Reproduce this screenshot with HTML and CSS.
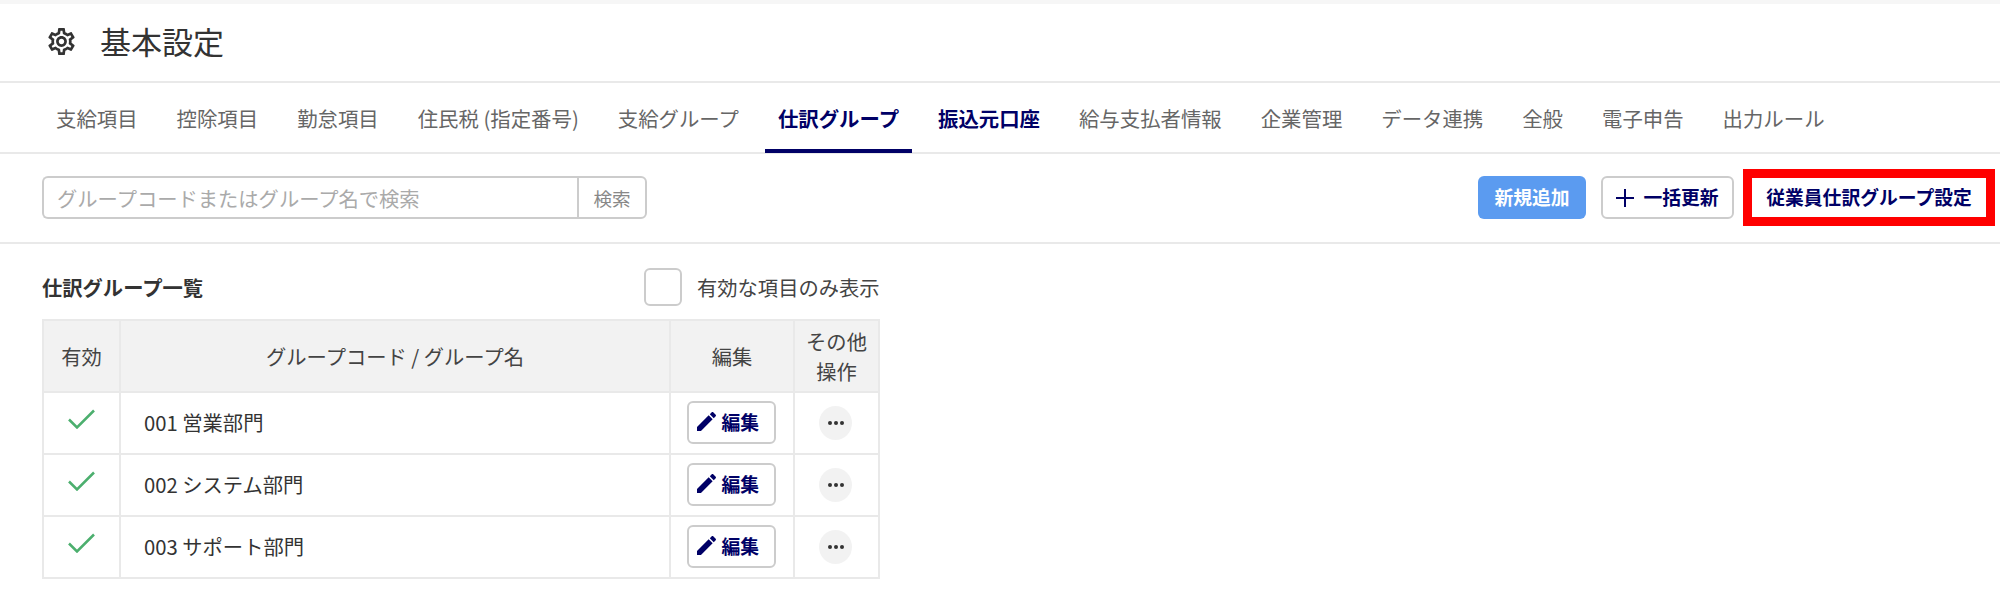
FILE: index.html
```html
<!DOCTYPE html>
<html lang="ja">
<head>
    <meta charset="UTF-8">
    <meta name="viewport" content="width=device-width, initial-scale=1.0">
    <title>基本設定</title>
    <link rel="stylesheet" href="styles.css">
</head>
<body>

    <!-- Page header -->
    <header class="page-header">
        <svg class="gear-icon" viewBox="2 2 20 20"><path d="M19.43 12.98c.04-.32.07-.64.07-.98 0-.34-.03-.66-.07-.98l2.11-1.65c.19-.15.24-.42.12-.64l-2-3.46c-.09-.16-.26-.25-.44-.25-.06 0-.12.01-.17.03l-2.49 1c-.52-.4-1.08-.73-1.69-.98l-.38-2.65C14.46 2.18 14.25 2 14 2h-4c-.25 0-.46.18-.49.42l-.38 2.65c-.61.25-1.17.59-1.69.98l-2.49-1c-.06-.02-.12-.03-.18-.03-.17 0-.34.09-.43.25l-2 3.46c-.13.22-.07.49.12.64l2.11 1.65c-.04.32-.07.65-.07.98 0 .33.03.66.07.98l-2.11 1.65c-.19.15-.24.42-.12.64l2 3.46c.09.16.26.25.44.25.06 0 .12-.01.17-.03l2.49-1c.52.4 1.08.73 1.69.98l.38 2.65c.03.24.24.42.49.42h4c.25 0 .46-.18.49-.42l.38-2.65c.61-.25 1.17-.59 1.69-.98l2.49 1c.06.02.12.03.18.03.17 0 .34-.09.43-.25l2-3.46c.12-.22.07-.49-.12-.64l-2.11-1.65zm-1.98-1.71c.04.31.05.52.05.73 0 .21-.02.43-.05.73l-.14 1.13.89.7 1.08.84-.7 1.21-1.27-.51-1.04-.42-.9.68c-.43.32-.84.56-1.25.73l-1.06.43-.16 1.13-.2 1.35h-1.4l-.19-1.35-.16-1.13-1.06-.43c-.43-.18-.83-.41-1.23-.71l-.91-.7-1.06.43-1.27.51-.7-1.21 1.08-.84.89-.7-.14-1.13c-.03-.31-.05-.54-.05-.74s.02-.43.05-.73l.14-1.13-.89-.7-1.08-.84.7-1.21 1.27.51 1.04.42.9-.68c.43-.32.84-.56 1.25-.73l1.06-.43.16-1.13.2-1.35h1.39l.19 1.35.16 1.13 1.06.43c.43.18.83.41 1.23.71l.91.7 1.06-.43 1.27-.51.7 1.21-1.07.85-.89.7.14 1.13zM12 8c-2.21 0-4 1.79-4 4s1.79 4 4 4 4-1.79 4-4-1.79-4-4-4zm0 6c-1.1 0-2-.9-2-2s.9-2 2-2 2 .9 2 2-.9 2-2 2z"/></svg>
        <h1>基本設定</h1>
    </header>

    <!-- Tabs -->
    <nav class="tabs">
        <a class="tab">支給項目</a>
        <a class="tab">控除項目</a>
        <a class="tab">勤怠項目</a>
        <a class="tab">住民税 (指定番号)</a>
        <a class="tab">支給グループ</a>
        <a class="tab active">仕訳グループ</a>
        <a class="tab strong">振込元口座</a>
        <a class="tab">給与支払者情報</a>
        <a class="tab">企業管理</a>
        <a class="tab">データ連携</a>
        <a class="tab">全般</a>
        <a class="tab">電子申告</a>
        <a class="tab">出力ルール</a>
    </nav>

    <!-- Toolbar -->
    <div class="toolbar">
        <div class="search-box">
            <input type="text" placeholder="グループコードまたはグループ名で検索">
            <button class="search-btn">検索</button>
        </div>
        <div class="toolbar-actions">
            <button class="btn btn-primary">新規追加</button>
            <button class="btn btn-plus"><span class="plus"></span>一括更新</button>
            <button class="btn btn-marked">従業員仕訳グループ設定</button>
        </div>
    </div>

    <!-- List -->
    <section class="list">
        <div class="list-head">
            <h2>仕訳グループ一覧</h2>
            <label class="only-active">
                <span class="checkbox"></span>
                有効な項目のみ表示
            </label>
        </div>

        <table class="group-table">
            <thead>
                <tr>
                    <th class="col-active">有効</th>
                    <th class="col-name">グループコード / グループ名</th>
                    <th class="col-edit">編集</th>
                    <th class="col-more">その他<br>操作</th>
                </tr>
            </thead>
            <tbody>
                <tr>
                    <td class="cell-check"><svg class="check-icon" viewBox="0 0 27 20"><path d="M1 10.5 9 18.5 26 1.500"/></svg></td>
                    <td class="cell-name">001 営業部門</td>
                    <td class="cell-center"><button class="edit-btn"><svg class="pencil-icon" viewBox="3 3 18 18"><path d="M3 17.25V21h3.75L17.81 9.94l-3.75-3.75L3 17.25zM20.71 7.04c.39-.39.39-1.02 0-1.41l-2.34-2.34c-.39-.39-1.02-.39-1.41 0l-1.83 1.83 3.75 3.75 1.83-1.83z"/></svg>編集</button></td>
                    <td class="cell-center"><button class="more-btn"><i></i><i></i><i></i></button></td>
                </tr>
                <tr>
                    <td class="cell-check"><svg class="check-icon" viewBox="0 0 27 20"><path d="M1 10.5 9 18.5 26 1.500"/></svg></td>
                    <td class="cell-name">002 システム部門</td>
                    <td class="cell-center"><button class="edit-btn"><svg class="pencil-icon" viewBox="3 3 18 18"><path d="M3 17.25V21h3.75L17.81 9.94l-3.75-3.75L3 17.25zM20.71 7.04c.39-.39.39-1.02 0-1.41l-2.34-2.34c-.39-.39-1.02-.39-1.41 0l-1.83 1.83 3.75 3.75 1.83-1.83z"/></svg>編集</button></td>
                    <td class="cell-center"><button class="more-btn"><i></i><i></i><i></i></button></td>
                </tr>
                <tr>
                    <td class="cell-check"><svg class="check-icon" viewBox="0 0 27 20"><path d="M1 10.5 9 18.5 26 1.500"/></svg></td>
                    <td class="cell-name">003 サポート部門</td>
                    <td class="cell-center"><button class="edit-btn"><svg class="pencil-icon" viewBox="3 3 18 18"><path d="M3 17.25V21h3.75L17.81 9.94l-3.75-3.75L3 17.25zM20.71 7.04c.39-.39.39-1.02 0-1.41l-2.34-2.34c-.39-.39-1.02-.39-1.41 0l-1.83 1.83 3.75 3.75 1.83-1.83z"/></svg>編集</button></td>
                    <td class="cell-center"><button class="more-btn"><i></i><i></i><i></i></button></td>
                </tr>
            </tbody>
        </table>
    </section>

</body>
</html>
```
FILE: styles.css
```css
/* General Styles */
* {
    box-sizing: border-box;
}

body {
    margin: 0;
    background: #fff;
    color: #333;
    font-family: "Noto Sans CJK JP", "Noto Sans", sans-serif;
    font-size: 20.3px;
}

button {
    font-family: inherit;
    cursor: pointer;
}

/* Page Header */
.page-header {
    display: flex;
    align-items: center;
    height: 83px;
    padding: 0 0 3px 48px;
    border-top: 4px solid #f6f6f6;
    border-bottom: 2px solid #e9e9e9;
}

.gear-icon {
    width: 27px;
    height: 27px;
    fill: #333;
}

h1 {
    margin: 0 0 0 25px;
    font-size: 31px;
    font-weight: 400;
    line-height: 40px;
}

/* Tabs */
.tabs {
    display: flex;
    gap: 13px;
    height: 71px;
    padding-left: 43px;
    border-bottom: 2px solid #e9e9e9;
}

.tab {
    display: flex;
    align-items: center;
    padding: 4px 13px 0;
    color: #666;
    font-size: 20.4px;
    white-space: nowrap;
    border-bottom: 4px solid transparent;
    margin-bottom: -1px;
}

.tab.strong,
.tab.active {
    color: #000066;
    font-weight: 700;
}

.tab.active {
    border-bottom-color: #000066;
}

/* Toolbar */
.toolbar {
    display: flex;
    justify-content: space-between;
    align-items: center;
    height: 90px;
    padding: 0 5px 1px 42px;
    border-bottom: 2px solid #e9e9e9;
}

.search-box {
    display: flex;
    width: 605px;
    height: 43px;
}

.search-box input {
    flex: 1;
    min-width: 0;
    padding: 0 13px;
    border: 2px solid #ccc;
    border-right: none;
    border-radius: 6px 0 0 6px;
    font-family: inherit;
    font-size: 20.3px;
    outline: none;
}

.search-box input::placeholder {
    color: #aaa;
}

.search-btn {
    width: 70px;
    padding: 0;
    border: 2px solid #ccc;
    border-radius: 0 6px 6px 0;
    background: #fff;
    color: #888;
    font-size: 18.6px;
}

.toolbar-actions {
    display: flex;
    align-items: center;
}

.btn {
    height: 43px;
    padding: 0 0 2px;
    border: 2px solid #ccc;
    border-radius: 6px;
    background: #fff;
    color: #000066;
    font-size: 18.8px;
    font-weight: 700;
    white-space: nowrap;
}

.btn-primary {
    width: 108px;
    border: none;
    background: #5b9bf0;
    color: #fff;
}

.btn-plus {
    display: flex;
    align-items: center;
    justify-content: center;
    width: 133px;
    margin-left: 15px;
}

.plus {
    position: relative;
    width: 18px;
    height: 18px;
    margin: 2px 9px 0 0;
}

.plus::before,
.plus::after {
    content: "";
    position: absolute;
    background: #000066;
}

.plus::before {
    left: 0;
    right: 0;
    top: 8px;
    height: 2px;
}

.plus::after {
    top: 0;
    bottom: 0;
    left: 8px;
    width: 2px;
}

.btn-marked {
    width: 252px;
    height: 57px;
    margin-left: 9px;
    border: 9px solid #ff0000;
    border-radius: 0;
}

/* List */
.list {
    padding: 0 42px;
}

.list-head {
    display: flex;
    align-items: center;
    width: 838px;
    height: 75px;
    padding-top: 10px;
}

h2 {
    margin: 0;
    width: 602px;
    font-size: 20.3px;
    font-weight: 700;
    line-height: 30px;
}

.only-active {
    display: flex;
    align-items: center;
    color: #444;
    white-space: nowrap;
}

.checkbox {
    width: 38px;
    height: 38px;
    margin-right: 15px;
    border: 2px solid #ccc;
    border-radius: 6px;
}

/* Table */
.group-table {
    width: 838px;
    border-collapse: collapse;
    table-layout: fixed;
}

.group-table th,
.group-table td {
    padding: 0;
    border: 2px solid #e9e9e9;
    text-align: center;
    height: 62px;
}

.group-table th {
    height: 72px;
    background: #f2f2f2;
    color: #444;
    font-weight: 400;
    line-height: 30px;
}

.col-active {
    width: 77px;
}

.col-edit {
    width: 124px;
}

.col-more {
    width: 85px;
}

.group-table td.cell-name {
    padding: 0 0 2px 23px;
    text-align: left;
}

.group-table td.cell-center {
    padding: 0 2px 2px 0;
}

.group-table td.cell-check {
    padding-bottom: 8px;
}

.check-icon {
    display: block;
    width: 27px;
    height: 20px;
    margin: 0 auto;
    fill: none;
    stroke: #4caf6e;
    stroke-width: 2.500;
}

.edit-btn {
    display: inline-flex;
    align-items: center;
    width: 89px;
    height: 43px;
    padding: 0 0 2px 8px;
    border: 2px solid #ccc;
    border-radius: 6px;
    background: #fff;
    color: #000066;
    font-size: 18.8px;
    font-weight: 700;
    vertical-align: middle;
}

.pencil-icon {
    width: 19px;
    height: 19px;
    margin-right: 6px;
    fill: #000066;
}

.more-btn {
    display: inline-flex;
    align-items: center;
    justify-content: center;
    gap: 2px;
    width: 33px;
    height: 34px;
    padding: 0;
    border: none;
    border-radius: 50%;
    background: #f2f2f2;
    vertical-align: middle;
}

.more-btn i {
    width: 4px;
    height: 4px;
    border-radius: 50%;
    background: #333;
}
```
